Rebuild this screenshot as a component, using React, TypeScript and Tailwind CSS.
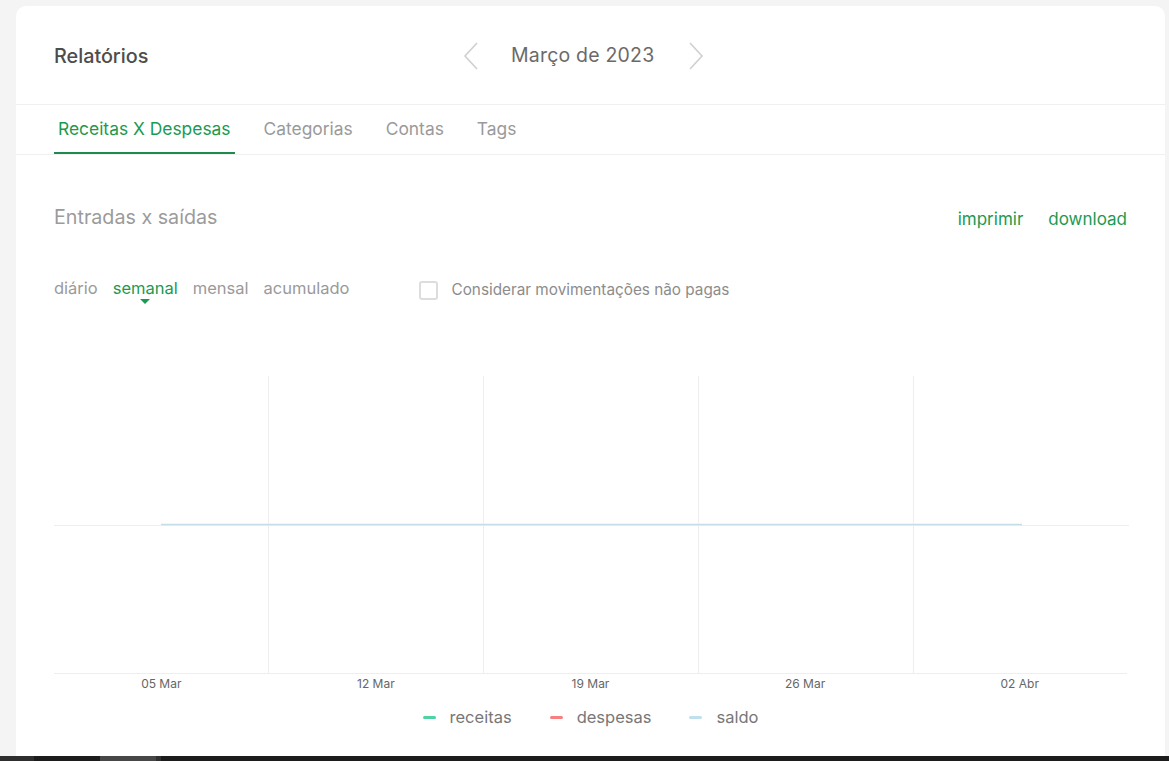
import React from 'react';

const GREEN = 'text-[#1b9a52]';

const tabs = ['Receitas X Despesas', 'Categorias', 'Contas', 'Tags'];
const periods = ['diário', 'semanal', 'mensal', 'acumulado'];
const labels = ['05 Mar', '12 Mar', '19 Mar', '26 Mar', '02 Abr'];

function Chevron({ dir }: { dir: 'left' | 'right' }) {
  return (
    <svg width="16" height="28" viewBox="0 0 16 28" fill="none">
      <polyline
        points={dir === 'left' ? '14,1 2,14 14,27' : '2,1 14,14 2,27'}
        stroke="#cfcfcf"
        strokeWidth="1.6"
      />
    </svg>
  );
}

function Chart() {
  return (
    <div className="mt-[77px]">
      <div className="relative h-[298px] border-b border-[#eeeeee]">
        <svg className="absolute inset-0" width="1075" height="298" viewBox="0 0 1075 298">
          {[214.5, 429.5, 644.5, 859.5].map((x) => (
            <line key={x} x1={x} y1="0" x2={x} y2="298" stroke="#eeeeee" strokeWidth="1" />
          ))}
          <line x1="0" y1="149.5" x2="1075" y2="149.5" stroke="#eeeeee" strokeWidth="1" />
          <line x1="107" y1="148.5" x2="968" y2="148.5" stroke="#c5dde9" strokeWidth="1.5" />
        </svg>
      </div>
      <div className="grid grid-cols-5 pt-[2px]">
        {labels.map((l) => (
          <div key={l} className="text-center text-[12px] leading-[16px] text-[#666]">
            {l}
          </div>
        ))}
      </div>
      <div className="flex justify-center items-center gap-[38px] mt-[14px] text-[16.5px] leading-[22px] text-[#777]">
        <span className="flex items-center gap-[14px]">
          <span className="w-[13px] h-[3px] rounded bg-[#4fd3a3]" />
          receitas
        </span>
        <span className="flex items-center gap-[14px]">
          <span className="w-[13px] h-[3px] rounded bg-[#f77f7f]" />
          despesas
        </span>
        <span className="flex items-center gap-[14px]">
          <span className="w-[13px] h-[3px] rounded bg-[#bfe0ee]" />
          saldo
        </span>
      </div>
    </div>
  );
}

export default function App() {
  return (
    <div
      className="h-[761px] flex flex-col bg-[#f4f4f4] overflow-hidden"
      style={{ fontFamily: 'Inter, "Noto Sans", sans-serif' }}
    >
      <div className="flex-1 pt-[6px] pl-[16px] pr-[4px]">
        <div className="h-full bg-white rounded-t-[10px]">
          <div className="h-[99px] flex items-center px-[38px] pt-[3px] border-b border-[#f0f0f0]">
            <div className="w-[409px] text-[19.8px] font-medium text-[#4d4d4d]">Relatórios</div>
            <div className="flex items-center -mt-[1px]">
              <Chevron dir="left" />
              <span className="ml-[32px] mr-[34px] text-[19.5px] text-[#6a6a6a] tracking-[0.2px]">Março de 2023</span>
              <Chevron dir="right" />
            </div>
          </div>

          <div className="h-[50px] flex gap-[25px] px-[38px] pt-[2px] border-b border-[#f0f0f0]">
            {tabs.map((t, i) => (
              <div
                key={t}
                className={`px-[4px] flex items-center text-[17.4px] ${
                  i === 0 ? 'text-[#1b9a52] border-b-2 border-[#1e8a4f]' : 'text-[#9a9a9a] border-b-2 border-transparent'
                }`}
              >
                {t}
              </div>
            ))}
          </div>

          <div className="px-[38px]">
            <div className="flex items-center justify-between mt-[51px] h-[24px]">
              <div className="text-[19.7px] text-[#9b9b9b]">Entradas x saídas</div>
              <div className={`flex gap-[25px] text-[17px] ${GREEN} pt-[4px]`}>
                <span>imprimir</span>
                <span>download</span>
              </div>
            </div>

            <div className="flex items-center mt-[47px] h-[22px]">
              <div className="flex gap-[15px] text-[16.5px]">
                {periods.map((p, i) => (
                  <div key={p} className="relative">
                    <span className={i === 1 ? GREEN : 'text-[#9a9a9a]'}>{p}</span>
                    {i === 1 && (
                      <span className="absolute left-1/2 -translate-x-1/2 top-[23px] w-0 h-0 border-l-[5px] border-r-[5px] border-t-[5px] border-l-transparent border-r-transparent border-t-[#1b9a52]" />
                    )}
                  </div>
                ))}
              </div>
              <div className="flex items-center ml-[69px] pt-[4px]">
                <span className="w-[19px] h-[19px] border-2 border-[#dddddd] rounded-[3px]" />
                <span className="ml-[14px] text-[15.3px] text-[#8c8c8c]">Considerar movimentações não pagas</span>
              </div>
            </div>

            <Chart />
          </div>
        </div>
      </div>
      <div className="h-[5px] flex">
        <div className="w-[34px] bg-[#2e2e2e]" />
        <div className="w-[66px] bg-[#1c1c1c]" />
        <div className="w-[56px] bg-[#474747]" />
        <div className="w-[5px] bg-[#303030]" />
        <div className="flex-1 bg-[#1c1c1c]" />
      </div>
    </div>
  );
}
